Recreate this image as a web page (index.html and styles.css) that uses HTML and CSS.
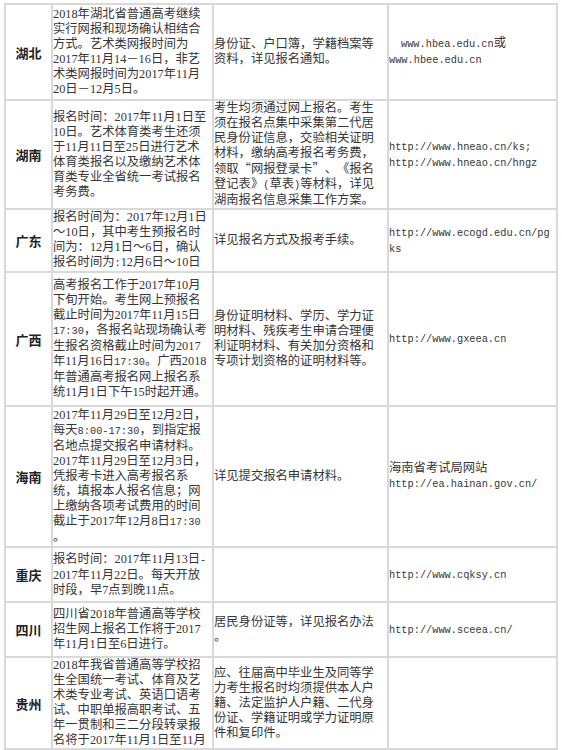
FILE: index.html
```html
<!DOCTYPE html>
<html lang="zh-CN">
<head>
<meta charset="utf-8">
<title>2018年各省高考报名时间</title>
<link rel="stylesheet" href="styles.css">
</head>
<body>
<table class="sheet">
  <colgroup><col class="c1"><col class="c2"><col class="c3"><col class="c4"></colgroup>
  <tr class="r-hubei">
    <th>湖北</th>
    <td class="desc">2018年湖北省普通高考继续<br>实行网报和现场确认相结合<br>方式。艺术类网报时间为<br>2017年11月14－16日，非艺<br>术类网报时间为2017年11月<br>20日－12月5日。</td>
    <td class="req">身份证、户口簿，学籍档案等<br>资料，详见报名通知。</td>
    <td class="site"><span class="url indent">www.hbea.edu.cn</span>或<br><span class="url">www.hbee.edu.cn</span></td>
  </tr>
  <tr class="r-hunan">
    <th>湖南</th>
    <td class="desc">报名时间：2017年11月1日至<br>10日。艺术体育类考生还须<br>于11月11日至25日进行艺术<br>体育类报名以及缴纳艺术体<br>育类专业全省统一考试报名<br>考务费。</td>
    <td class="req">考生均须通过网上报名。考生<br>须在报名点集中采集第二代居<br>民身份证信息，交验相关证明<br>材料，缴纳高考报名考务费，<br>领取<span class="cjk">“</span>网报登录卡<span class="cjk">”</span>、《报名<br>登记表》<span class="hw">(</span>草表<span class="hw">)</span>等材料，详见<br>湖南报名信息采集工作方案。</td>
    <td class="site"><span class="url">http://www.hneao.cn/ks;</span><br><span class="url">http://www.hneao.cn/hngz</span></td>
  </tr>
  <tr class="r-guangdong">
    <th>广东</th>
    <td class="desc">报名时间为：2017年12月1日<br>～10日，其中考生预报名时<br>间为：12月1日～6日，确认<br>报名时间为<span class="hw">:</span>12月6日～10日</td>
    <td class="req">详见报名方式及报考手续。</td>
    <td class="site"><span class="url">http://www.ecogd.edu.cn/pg<br>ks</span></td>
  </tr>
  <tr class="r-guangxi">
    <th>广西</th>
    <td class="desc">高考报名工作于2017年10月<br>下旬开始。考生网上预报名<br>截止时间为2017年11月15日<br><span class="hw">17:30</span>，各报名站现场确认考<br>生报名资格截止时间为2017<br>年11月16日<span class="hw">17:30</span>。广西2018<br>年普通高考报名网上报名系<br>统11月1日下午15时起开通。</td>
    <td class="req">身份证明材料、学历、学力证<br>明材料、残疾考生申请合理便<br>利证明材料、有关加分资格和<br>专项计划资格的证明材料等。</td>
    <td class="site"><span class="url">http://www.gxeea.cn</span></td>
  </tr>
  <tr class="r-hainan">
    <th>海南</th>
    <td class="desc">2017年11月29日至12月2日，<br>每天<span class="hw">8:00-17:30</span>，到指定报<br>名地点提交报名申请材料。<br>2017年11月29日至12月3日，<br>凭报考卡进入高考报名系<br>统，填报本人报名信息；网<br>上缴纳各项考试费用的时间<br>截止于2017年12月8日<span class="hw">17:30</span><br>。</td>
    <td class="req">详见提交报名申请材料。</td>
    <td class="site">海南省考试局网站<br><span class="url">http://ea.hainan.gov.cn/</span></td>
  </tr>
  <tr class="r-chongqing">
    <th>重庆</th>
    <td class="desc">报名时间：2017年11月13日<span class="hw">-</span><br>2017年11月22日。每天开放<br>时段，早7点到晚11点。</td>
    <td class="req"></td>
    <td class="site"><span class="url">http://www.cqksy.cn</span></td>
  </tr>
  <tr class="r-sichuan">
    <th>四川</th>
    <td class="desc">四川省2018年普通高等学校<br>招生网上报名工作将于2017<br>年11月1日至6日进行。</td>
    <td class="req">居民身份证等，详见报名办法<br>。</td>
    <td class="site"><span class="url">http://www.sceea.cn/</span></td>
  </tr>
  <tr class="r-guizhou">
    <th>贵州</th>
    <td class="desc">2018年我省普通高等学校招<br>生全国统一考试、体育及艺<br>术类专业考试、英语口语考<br>试、中职单报高职考试、五<br>年一贯制和三二分段转录报<br>名将于2017年11月1日至11月</td>
    <td class="req">应、往届高中毕业生及同等学<br>力考生报名时均须提供本人户<br>籍、法定监护人户籍、二代身<br>份证、学籍证明或学力证明原<br>件和复印件。</td>
    <td class="site"></td>
  </tr>
</table>
</body>
</html>
```
FILE: styles.css
```css
html, body {
  margin: 0;
  padding: 0;
  background: #ffffff;
}

.sheet {
  border-collapse: collapse;
  table-layout: fixed;
  width: 553px;
  margin: 3px 0 0 4px;
  font-family: "Liberation Serif", "Noto Sans CJK SC", serif;
  font-size: 12.3px;
  line-height: 15px;
  color: #363636;
  text-spacing-trim: space-all;
}

.c1 { width: 47px; }
.c2 { width: 161px; }
.c3 { width: 175px; }
.c4 { width: 169px; }

.sheet th,
.sheet td {
  border: 2px solid #d9d9d9;
  vertical-align: middle;
  text-align: left;
  padding: 0;
  white-space: nowrap;
  overflow: hidden;
}

.sheet th {
  font-family: "Noto Sans CJK SC", sans-serif;
  font-size: 13px;
  font-weight: bold;
  text-align: center;
  color: #222222;
}

.desc { padding-left: 3px; }
.req { padding-left: 4px; }
.site { padding-left: 3px; }

.cjk {
  font-family: "Noto Sans CJK SC", sans-serif;
}

.url {
  font-family: "Liberation Mono", monospace;
  font-size: 10.3px;
}

.indent { padding-left: 12px; }

.hw {
  font-family: "Liberation Mono", monospace;
  font-size: 10.3px;
}

.r-hubei { height: 96px; }
.r-hunan { height: 109px; }
.r-guangdong { height: 60px; }
.r-guangxi { height: 134px; }
.r-hainan { height: 141px; }
.r-chongqing { height: 55px; }
.r-sichuan { height: 55px; }
.r-guizhou { height: 92px; }
```
